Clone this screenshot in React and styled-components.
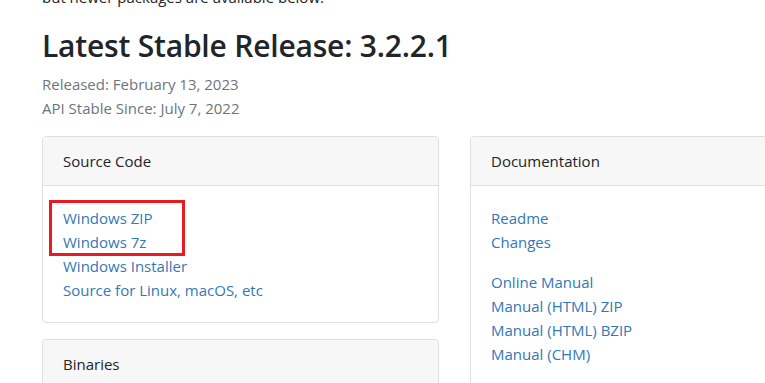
import React from "react";
import styled, { createGlobalStyle } from "styled-components";

const sourceLinks = [
  { id: 1, label: "Windows ZIP", marked: true },
  { id: 2, label: "Windows 7z", marked: true },
  { id: 3, label: "Windows Installer" },
  { id: 4, label: "Source for Linux, macOS, etc" },
];

const docGroups = [
  ["Readme", "Changes"],
  ["Online Manual", "Manual (HTML) ZIP", "Manual (HTML) BZIP", "Manual (CHM)"],
];

const GlobalStyle = createGlobalStyle`
  body {
    margin: 0;
    background: #fff;
    font-family: "Open Sans", "Noto Sans", sans-serif;
    color: #212529;
    overflow: hidden;
  }
`;

const Page = styled.div`
  margin-top: -15px;
  padding: 0 0 0 42px;
  font-size: 15px;
  line-height: 24px;
`;

const Intro = styled.p`
  margin: 0 0 16px;
`;

const Title = styled.h2`
  margin: 0 0 6px;
  font-size: 30px;
  font-weight: 600;
  line-height: 41px;
  letter-spacing: -0.2px;
  color: #212529;
`;

const Meta = styled.div`
  color: #6c757d;
  margin-bottom: 16px;
`;

const Columns = styled.div`
  display: grid;
  grid-template-columns: 397px 397px;
  gap: 31px;
  align-items: start;
`;

const Stack = styled.div`
  display: flex;
  flex-direction: column;
  gap: 16px;
`;

const Card = styled.section`
  border: 1px solid #dfdfdf;
  border-radius: 4px;
  background: #fff;
  overflow: hidden;
`;

const CardHeader = styled.div`
  background: #f7f7f7;
  padding: 12px 20px;
  border-bottom: ${(p) => (p.$open ? "1px solid #dfdfdf" : "none")};
`;

const CardBody = styled.div`
  padding: 20px;
  display: flex;
  flex-direction: column;
  gap: 16px;
`;

const LinkList = styled.div`
  display: flex;
  flex-direction: column;
`;

const Marked = styled.div`
  position: relative;
  display: flex;
  flex-direction: column;
  &::before {
    content: "";
    position: absolute;
    left: -14px;
    top: -6px;
    width: 136px;
    bottom: -2px;
    border: 3px solid #e81b23;
    box-sizing: border-box;
  }
`;

const Link = styled.a`
  color: #3278b8;
  text-decoration: none;
  cursor: pointer;
`;

const App = () => {
  const marked = sourceLinks.filter((l) => l.marked);
  const rest = sourceLinks.filter((l) => !l.marked);
  return (
    <>
      <GlobalStyle />
      <Page>
        <Intro>but newer packages are available below.</Intro>
        <Title>Latest Stable Release: 3.2.2.1</Title>
        <Meta>
          <div>Released: February 13, 2023</div>
          <div>API Stable Since: July 7, 2022</div>
        </Meta>
        <Columns>
          <Stack>
            <Card>
              <CardHeader $open>Source Code</CardHeader>
              <CardBody>
                <LinkList>
                  <Marked>
                    {marked.map((l) => (
                      <Link key={l.id}>{l.label}</Link>
                    ))}
                  </Marked>
                  {rest.map((l) => (
                    <Link key={l.id}>{l.label}</Link>
                  ))}
                </LinkList>
              </CardBody>
            </Card>
            <Card>
              <CardHeader $open>Binaries</CardHeader>
              <CardBody>
                <LinkList>
                  <Link>Windows</Link>
                </LinkList>
              </CardBody>
            </Card>
          </Stack>
          <Card>
            <CardHeader $open>Documentation</CardHeader>
            <CardBody>
              {docGroups.map((group, i) => (
                <LinkList key={i}>
                  {group.map((label) => (
                    <Link key={label}>{label}</Link>
                  ))}
                </LinkList>
              ))}
            </CardBody>
          </Card>
        </Columns>
      </Page>
    </>
  );
};

export default App;
